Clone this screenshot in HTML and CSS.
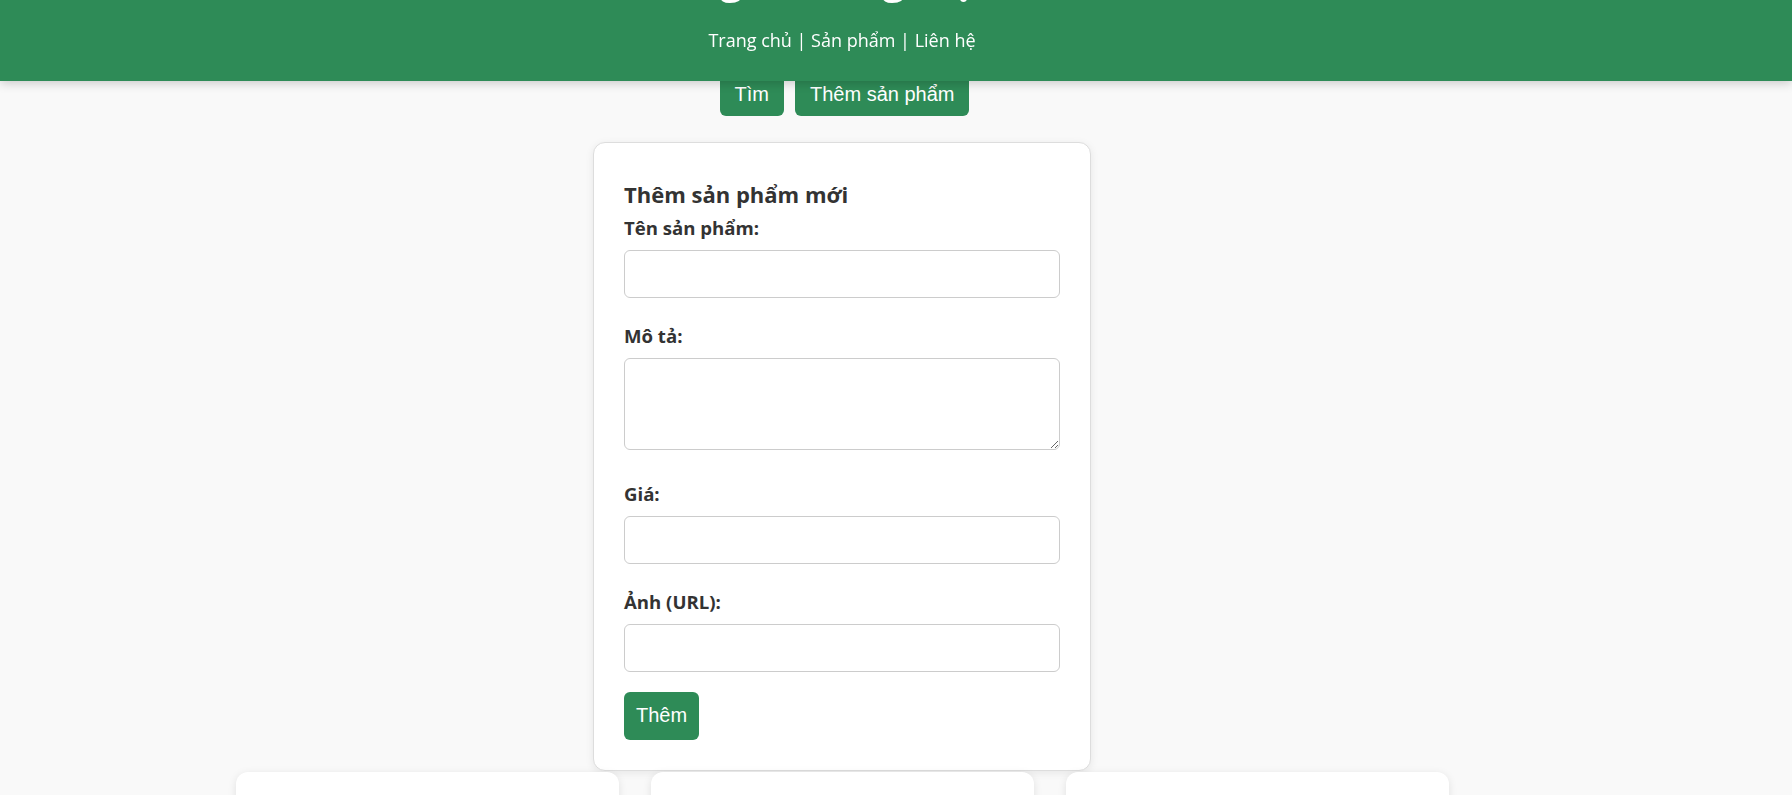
FILE: index.html
```html
<!DOCTYPE html>
<html lang="vi">
<head>
<meta charset="utf-8">
<title>Cửa hàng</title>
<link rel="stylesheet" href="styles.css">
</head>
<body>
<header class="site-header">
  <div class="header-inner">
    <h1 class="site-title">Cửa hàng Thương Mại Online</h1>
    <nav class="site-nav">Trang chủ | Sản phẩm | Liên hệ</nav>
  </div>
</header>
<main class="page">
  <div class="toolbar">
    <button class="btn btn-top" type="button">Tìm</button>
    <button class="btn btn-top" type="button">Thêm sản phẩm</button>
  </div>
  <section class="form-card">
    <h3 class="form-title">Thêm sản phẩm mới</h3>
    <label class="field-label">Tên sản phẩm:</label>
    <input class="field-input" type="text">
    <label class="field-label">Mô tả:</label>
    <textarea class="field-input field-textarea"></textarea>
    <label class="field-label">Giá:</label>
    <input class="field-input" type="text">
    <label class="field-label">Ảnh (URL):</label>
    <input class="field-input field-last" type="text">
    <button class="btn btn-submit" type="button">Thêm</button>
  </section>
  <div class="product-grid">
    <div class="product-card"></div>
    <div class="product-card"></div>
    <div class="product-card"></div>
  </div>
</main>
</body>
</html>
```
FILE: styles.css
```css
html, body {
  margin: 0;
  padding: 0;
  background: #f9f9f9;
  font-family: "Open Sans", "Noto Sans", sans-serif;
  color: #333;
  overflow: hidden;
}

.site-header {
  position: fixed;
  top: -45px;
  left: 0;
  right: 0;
  background: #2e8b57;
  color: #fff;
  padding: 0 0 29px;
  box-shadow: 0 2px 10px rgba(0, 0, 0, 0.2);
  z-index: 10;
}

.header-inner {
  width: 1684px;
  text-align: center;
}

.site-title {
  margin: 0;
  font-size: 39px;
  line-height: 48px;
  font-weight: 700;
}

.site-nav {
  margin-top: 25px;
  font-size: 18px;
  line-height: 24px;
}

.page {
  width: 1684px;
  padding-top: 73px;
}

.toolbar {
  display: flex;
  justify-content: center;
  gap: 11px;
  padding-left: 5px;
  margin-bottom: 26px;
}

.btn {
  font-family: "Liberation Sans", Arial, sans-serif;
  font-size: 20px;
  line-height: 23px;
  color: #fff;
  background: #2e8b57;
  border: none;
  border-radius: 6px;
  cursor: pointer;
}

.btn-top {
  padding: 10px 15px;
}

.btn-submit {
  display: block;
  padding: 12px 12px 13px;
}

.form-card {
  box-sizing: border-box;
  width: 498px;
  margin: 0 auto;
  padding: 30px;
  background: #fff;
  border: 1px solid #ddd;
  border-radius: 12px;
  box-shadow: 0 2px 8px rgba(0, 0, 0, 0.08);
}

.form-title {
  margin: 7px 0 8px;
  font-size: 22px;
  line-height: 28px;
  font-weight: 700;
}

.field-label {
  display: block;
  font-size: 18.6px;
  line-height: 24px;
  font-weight: 700;
  margin-bottom: 10px;
}

.field-input {
  display: block;
  box-sizing: border-box;
  width: 100%;
  height: 48px;
  margin: 0 0 26px;
  padding: 12px;
  border: 1px solid #ccc;
  border-radius: 6px;
  font-family: inherit;
  font-size: 16px;
  background: #fff;
}

.field-textarea {
  height: 92px;
  margin-bottom: 32px;
  resize: vertical;
}

.field-last {
  margin-bottom: 20px;
}

.product-grid {
  display: grid;
  grid-template-columns: repeat(3, 1fr);
  gap: 32px;
  width: 1213px;
  margin: 1px auto 0;
}

.product-card {
  height: 320px;
  background: #fff;
  border-radius: 12px;
  box-shadow: 0 2px 8px rgba(0, 0, 0, 0.1);
}
```
